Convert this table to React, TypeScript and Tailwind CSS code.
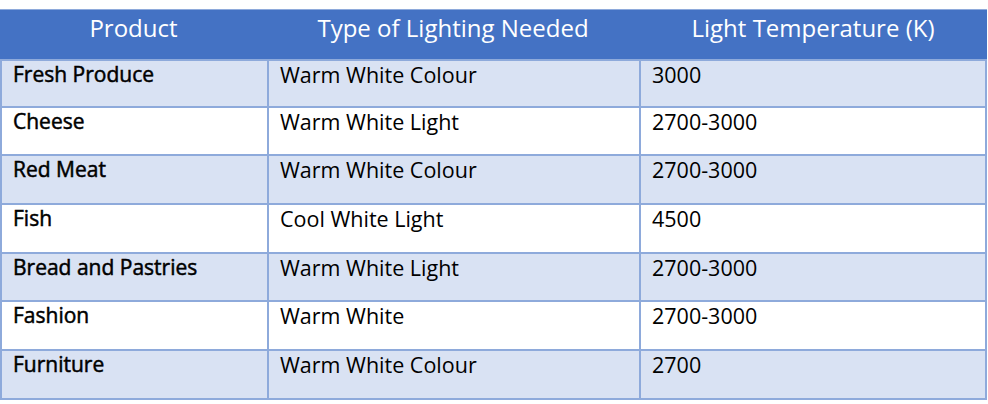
import React from "react"

const rows: [string, string, string][] = [
  ["Fresh Produce", "Warm White Colour", "3000"],
  ["Cheese", "Warm White Light", "2700-3000"],
  ["Red Meat", "Warm White Colour", "2700-3000"],
  ["Fish", "Cool White Light", "4500"],
  ["Bread and Pastries", "Warm White Light", "2700-3000"],
  ["Fashion", "Warm White", "2700-3000"],
  ["Furniture", "Warm White Colour", "2700"],
]

export default function App() {
  return (
    <div className="w-[988px] h-[404px] bg-white pt-[9px] overflow-hidden" style={{ fontFamily: '"Open Sans", sans-serif' }}>
      <div className="w-[987px] border-t border-[#8eaadb]">
        <div className="grid grid-cols-[267px_372px_348px] h-[49px] bg-[#4472c4] text-white text-[24px] leading-none">
          <div className="flex justify-center pt-[6px]">Product</div>
          <div className="flex justify-center pt-[6px]">Type of Lighting Needed</div>
          <div className="flex justify-center pt-[6px]">Light Temperature (K)</div>
        </div>
        <div className="border-l-2 border-r-2 border-[#8eaadb]">
          {rows.map((r, i) => (
            <div
              key={r[0]}
              className={`grid grid-cols-[265px_372px_346px] h-[48.7px] border-b-2 border-[#8eaadb] text-[21.5px] leading-none text-black ${
                i % 2 === 0 ? "bg-[#d9e2f3]" : "bg-white"
              } ${i === 0 ? "border-t-2" : ""}`}
            >
              <div className="pl-[11px] pt-[3px] text-[21px] [-webkit-text-stroke:0.5px_black]">{r[0]}</div>
              <div className="pl-[11px] pt-[3px] border-l-2 border-[#8eaadb]">{r[1]}</div>
              <div className="pl-[11px] pt-[3px] border-l-2 border-[#8eaadb]">{r[2]}</div>
            </div>
          ))}
        </div>
      </div>
    </div>
  )
}
